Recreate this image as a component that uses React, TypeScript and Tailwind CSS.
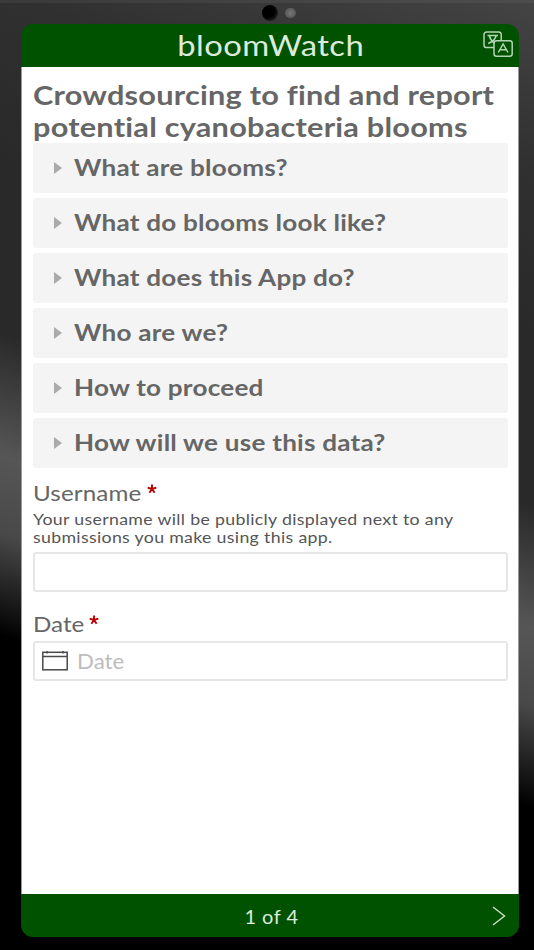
import { useState } from 'react';

const topics = [
  'What are blooms?',
  'What do blooms look like?',
  'What does this App do?',
  'Who are we?',
  'How to proceed',
  'How will we use this data?',
];

const TranslateIcon = () => (
  <svg width="30" height="27" viewBox="0 0 30 27" fill="none" stroke="#b5d3b5" strokeWidth="1.5">
    <path d="M11 16.500H3.600a2.600 2.600 0 0 1-2.600-2.600V3.600A2.600 2.600 0 0 1 3.600 1h12a2.600 2.600 0 0 1 2.600 2.600V9.500" />
    <path d="M4.500 4.500h10.500M6.200 4.500c.8 3.500 3.500 6.500 5.300 8M13.200 4.500c-.8 3.500-4 6.500-8 8" />
    <rect x="11" y="9.700" width="18.200" height="15.600" rx="2.500" />
    <path d="M15.300 21.500l4.800-8.500L25 21.500M17 18.700h6.300" />
  </svg>
);

const CalendarIcon = () => (
  <svg width="26" height="20" viewBox="0 0 26 20" fill="none" stroke="#4a4a4a" strokeWidth="1.500">
    <rect x="0.800" y="1.300" width="24.400" height="17.500" />
    <path d="M1 5.500h24M5 0v2.500M21 0v2.500" />
  </svg>
);

const Required = () => (
  <svg width="10" height="10" viewBox="0 0 10 10" className="mb-[8px] ml-[5px]" stroke="#b80000" strokeWidth="1.900">
    <path d="M5 5V.5M5 5l4.300-1.400M5 5l2.600 3.700M5 5L2.400 8.700M5 5L.7 3.600" />
  </svg>
);

const Topic = ({ title }: { title: string }) => (
  <button className="flex h-[50px] w-full items-center rounded-[3px] bg-[#f4f4f4] pl-[21px] text-left">
    <svg width="8" height="12" viewBox="0 0 8 12">
      <path d="M0 0l8 6-8 6z" fill="#aaaaaa" />
    </svg>
    <span className="mb-[2px] ml-3 origin-left scale-x-[1.135] text-[23px] leading-[30px] font-bold tracking-[0.2px] text-[#666]">
      {title}
    </span>
  </button>
);

export default function App() {
  const [username, setUsername] = useState('');
  const [date, setDate] = useState('');

  return (
    <div className="relative flex h-[950px] w-[534px] flex-col bg-[linear-gradient(198deg,#444_0%,#303030_15%,#292929_30%,#292929_45%,#565656_56%,#484848_63%,#000_72%)] px-[21px] pt-6 font-[Lato,sans-serif]">
      {/* Camera */}
      <div className="absolute top-0 left-0 h-[3px] w-full bg-white/5" />
      <div className="absolute top-[5px] left-[262px] h-4 w-4 rounded-full bg-[radial-gradient(circle_at_40%_40%,#000_45%,#222_75%)]" />
      <div className="absolute top-2 left-[285px] h-[10px] w-[11px] rounded-full bg-[radial-gradient(circle,#777,#4c4c4c)]" />

      <div className="flex h-[913px] w-[498px] flex-col overflow-hidden rounded-xl">
        {/* Header */}
        <header className="relative flex h-[43px] items-center justify-center bg-[#005200]">
          <h1 className="mb-[2px] ml-[2px] scale-x-[1.13] text-[29px] leading-[40px] tracking-[0.4px] text-[#dcebdc]">bloomWatch</h1>
          <div className="absolute top-[7px] right-[6px]">
            <TranslateIcon />
          </div>
        </header>

        <main className="flex-1 border-x border-[#999] bg-white pt-3 pr-[10px] pl-[11px]">
          <h2 className="origin-left scale-x-[1.137] text-[27px] leading-[32px] font-bold tracking-[0.2px] whitespace-nowrap text-[#666]">
            Crowdsourcing to find and report
            <br />
            potential cyanobacteria blooms
          </h2>

          <div className="flex flex-col gap-[5px]">
            {topics.map((title) => (
              <Topic key={title} title={title} />
            ))}
          </div>

          {/* Username */}
          <label className="mt-[11px] flex h-7 items-center text-[22px] leading-[28px] text-[#666]">
            <span className="w-[109px] origin-left scale-x-[1.1] tracking-[0.1px]">Username</span>
            <Required />
          </label>
          <p className="mt-[3px] origin-left scale-x-[1.107] text-[16px] leading-[18px] tracking-[0.3px] whitespace-nowrap text-[#555]">
            Your username will be publicly displayed next to any
            <br />
            submissions you make using this app.
          </p>
          <input
            value={username}
            onChange={(e) => setUsername(e.target.value)}
            className="mt-[6px] block h-10 w-full rounded-[3px] border-2 border-[#e6e6e6] px-2 outline-none"
          />

          {/* Date */}
          <label className="mt-[18px] flex h-7 items-center text-[22px] leading-[28px] text-[#666]">
            <span className="w-[51px] origin-left scale-x-[1.1]">Date</span>
            <Required />
          </label>
          <div className="mt-[3px] flex h-10 items-center rounded-[3px] border-2 border-[#e6e6e6] pl-[7px]">
            <CalendarIcon />
            <input
              value={date}
              onChange={(e) => setDate(e.target.value)}
              placeholder="Date"
              className="ml-[9px] w-[300px] origin-left scale-x-[1.06] text-[21px] outline-none placeholder:text-[#bdbdbd]"
            />
          </div>
        </main>

        {/* Footer */}
        <footer className="relative flex h-[43px] items-center justify-center bg-[#005200] pl-[3px] text-[20px] tracking-[0.5px] text-[#dcebdc]">
          1 of 4
          <svg width="14" height="20" viewBox="0 0 14 20" className="absolute top-3 right-[13px]" fill="none" stroke="#c3dcc3" strokeWidth="1.500">
            <path d="M1 1l11.500 9L1 19" />
          </svg>
        </footer>
      </div>
    </div>
  );
}
